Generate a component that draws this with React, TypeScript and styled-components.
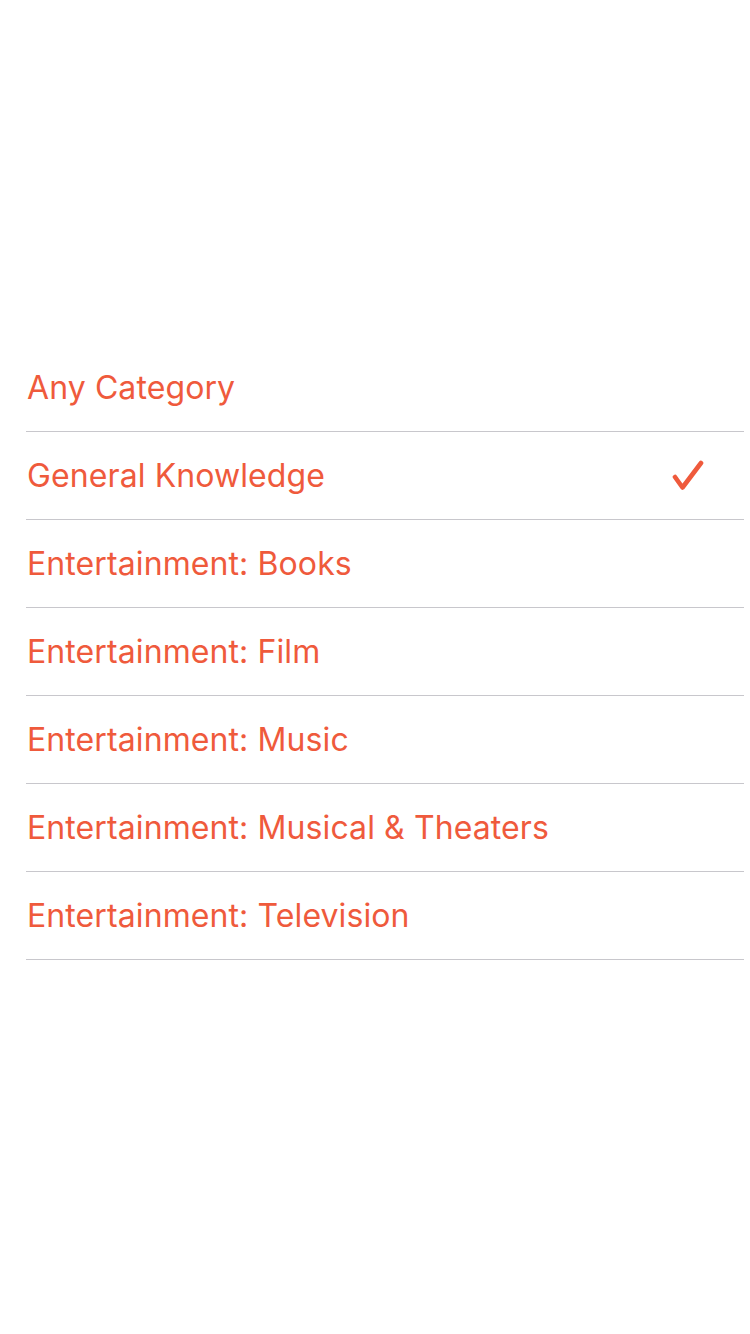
import { createGlobalStyle } from 'styled-components'
import styled from 'styled-components'

const GlobalStyle = createGlobalStyle`
    html, body {
        margin: 0;
        padding: 0;
        background: #ffffff;
    }
    body {
        font-family: Inter, Roboto, "Noto Sans", sans-serif;
    }
`

const Page = styled.div`
    width: 750px;
    min-height: 1334px;
    background: #ffffff;
    padding-top: 344px;
    box-sizing: border-box;
`

const List = styled.ul`
    list-style: none;
    margin: 0 6px 0 26px;
    padding: 0;
`

const Row = styled.li`
    height: 88px;
    display: flex;
    align-items: center;
    justify-content: space-between;
    padding: 0 40px 0 1px;
    border-bottom: 1px solid #c8c7cc;
    box-sizing: border-box;
    cursor: pointer;
`

const Label = styled.span`
    color: #ef5a3c;
    font-size: 32px;
    letter-spacing: 0.1px;
`

const Check = () => (
    <svg width="32" height="32" viewBox="0 0 32 32" fill="none">
        <path d="M3 17 L10.5 27.5 L29 3" stroke="#ef5a3c" strokeWidth="4.6" strokeLinecap="round" strokeLinejoin="round" />
    </svg>
)

const categories = [
    'Any Category',
    'General Knowledge',
    'Entertainment: Books',
    'Entertainment: Film',
    'Entertainment: Music',
    'Entertainment: Musical & Theaters',
    'Entertainment: Television',
]

const App = () => {
    const selected = 'General Knowledge'

    return (
        <>
            <GlobalStyle />
            <Page>
                <List>
                    {categories.map((c) => (
                        <Row key={c}>
                            <Label>{c}</Label>
                            {c == selected && <Check />}
                        </Row>
                    ))}
                </List>
            </Page>
        </>
    )
}
export default App
